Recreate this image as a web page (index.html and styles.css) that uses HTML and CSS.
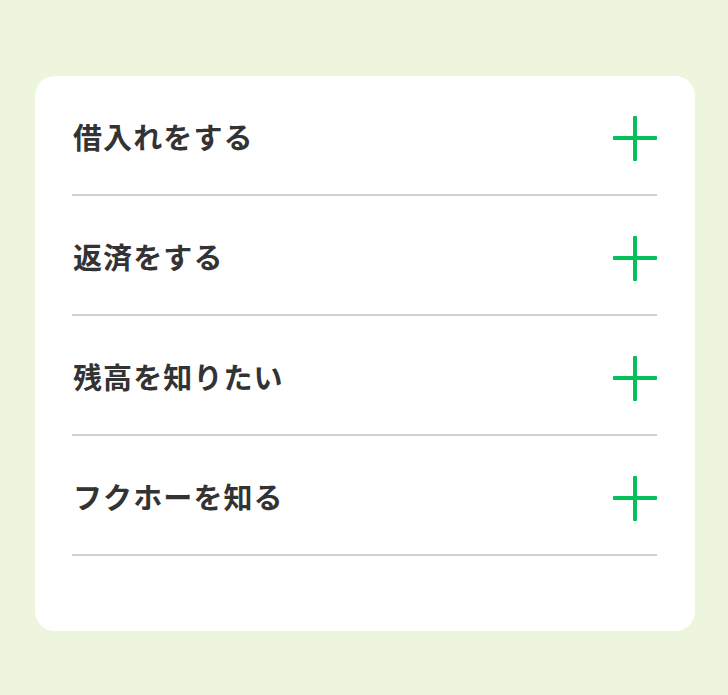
FILE: index.html
```html
<!DOCTYPE html>
<html lang="ja">
<head>
<meta charset="utf-8">
<link rel="stylesheet" href="styles.css">
</head>
<body>
<div class="page">
  <div class="card">
    <div class="row"><span class="label">借入れをする</span><span class="plus"></span></div>
    <div class="row"><span class="label">返済をする</span><span class="plus"></span></div>
    <div class="row"><span class="label">残高を知りたい</span><span class="plus"></span></div>
    <div class="row"><span class="label">フクホーを知る</span><span class="plus"></span></div>
  </div>
</div>
</body>
</html>
```
FILE: styles.css
```css
html, body {
  margin: 0;
  padding: 0;
  background: #eef5dd;
}
.page {
  width: 728px;
  height: 695px;
  padding: 76px 0 0 35px;
  box-sizing: border-box;
}
.card {
  width: 660px;
  height: 555px;
  box-sizing: border-box;
  background: #ffffff;
  border-radius: 20px;
  padding: 0 38px 0 37px;
}
.row {
  height: 120px;
  box-sizing: border-box;
  border-bottom: 2px solid #cfcfcf;
  display: flex;
  align-items: center;
  justify-content: space-between;
  padding: 2px 0 0 1px;
}
.label {
  font-family: "Noto Sans CJK JP", "Noto Sans", sans-serif;
  font-weight: 700;
  font-size: 29px;
  letter-spacing: 1.1px;
  color: #333333;
}
.plus {
  position: relative;
  width: 44px;
  height: 45px;
  margin-top: 5px;
}
.plus::before,
.plus::after {
  content: "";
  position: absolute;
  background: #06c05a;
  border-radius: 1px;
}
.plus::before {
  left: 0;
  top: 20px;
  width: 44px;
  height: 4px;
}
.plus::after {
  left: 20px;
  top: 0;
  width: 4px;
  height: 45px;
}
```
